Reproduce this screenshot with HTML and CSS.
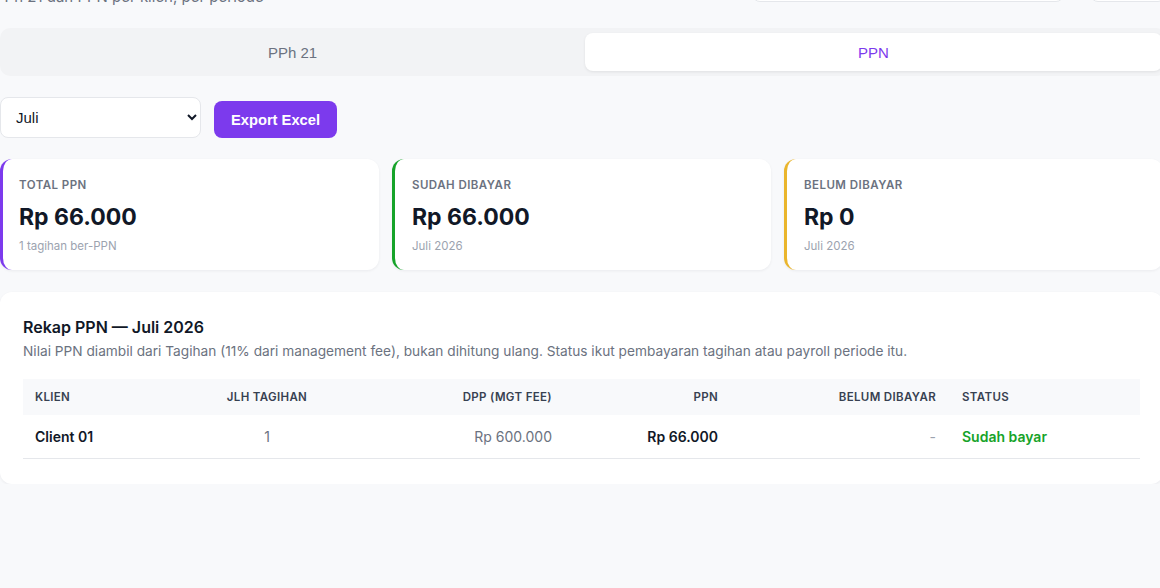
FILE: index.html
```html
<!DOCTYPE html>
<html lang="id">
<head>
<meta charset="utf-8">
<title>Rekap Pajak</title>
<link rel="stylesheet" href="styles.css">
</head>
<body>
<div class="page">
  <div class="topbar">
    <p class="subtitle">PPh 21 dan PPN per klien, per periode</p>
    <div class="top-controls">
      <div class="top-input"></div>
      <div class="top-btn"></div>
    </div>
  </div>

  <div class="tabs">
    <button class="tab">PPh 21</button>
    <button class="tab active">PPN</button>
  </div>

  <div class="controls">
    <select class="period">
      <option>Juli</option>
    </select>
    <button class="btn-export">Export Excel</button>
  </div>

  <div class="cards">
    <div class="card card-purple">
      <div class="card-label">TOTAL PPN</div>
      <div class="card-value">Rp 66.000</div>
      <div class="card-sub">1 tagihan ber-PPN</div>
    </div>
    <div class="card card-green">
      <div class="card-label">SUDAH DIBAYAR</div>
      <div class="card-value">Rp 66.000</div>
      <div class="card-sub">Juli 2026</div>
    </div>
    <div class="card card-yellow">
      <div class="card-label">BELUM DIBAYAR</div>
      <div class="card-value">Rp 0</div>
      <div class="card-sub">Juli 2026</div>
    </div>
  </div>

  <div class="panel">
    <h2 class="panel-title">Rekap PPN — Juli 2026</h2>
    <p class="panel-desc">Nilai PPN diambil dari Tagihan (11% dari management fee), bukan dihitung ulang. Status ikut pembayaran tagihan atau payroll periode itu.</p>
    <table class="rekap">
      <colgroup>
        <col class="c1"><col class="c2"><col class="c3"><col class="c4"><col class="c5"><col class="c6">
      </colgroup>
      <thead>
        <tr>
          <th class="left">KLIEN</th>
          <th class="center">JLH TAGIHAN</th>
          <th class="right">DPP (MGT FEE)</th>
          <th class="right">PPN</th>
          <th class="right unpaid">BELUM DIBAYAR</th>
          <th class="left">STATUS</th>
        </tr>
      </thead>
      <tbody>
        <tr>
          <td class="left client">Client 01</td>
          <td class="center muted">1</td>
          <td class="right muted">Rp 600.000</td>
          <td class="right strong">Rp 66.000</td>
          <td class="right dash unpaid">-</td>
          <td class="left status-paid">Sudah bayar</td>
        </tr>
      </tbody>
    </table>
  </div>
</div>
</body>
</html>
```

FILE: styles.css
```css
* { box-sizing: border-box; }

html, body {
  margin: 0;
  padding: 0;
  background: #f8f9fb;
  overflow: hidden;
}

body {
  font-family: Inter, "Noto Sans", sans-serif;
  color: #111827;
}

.page {
  width: 1166px;
}

.topbar {
  display: flex;
  justify-content: space-between;
  align-items: flex-start;
  height: 40px;
  margin-top: -34px;
}

.subtitle {
  margin: 21px 0 0 -5px;
  font-size: 15px;
  line-height: 20px;
  color: #6b7280;
}

.top-controls {
  display: flex;
  gap: 26px;
}

.top-input {
  width: 312px;
  height: 36px;
  background: #ffffff;
  border: 1px solid #e5e7eb;
  border-radius: 8px;
}

.top-btn {
  width: 76px;
  height: 36px;
  background: #ffffff;
  border: 1px solid #e5e7eb;
  border-radius: 8px;
}

.tabs {
  display: flex;
  gap: 4px;
  margin-top: 22px;
  padding: 5px 4px;
  background: #f2f3f5;
  border-radius: 10px;
}

.tab {
  flex: 1;
  height: 38px;
  border: none;
  background: transparent;
  border-radius: 8px;
  font-family: "Liberation Sans", Arial, sans-serif;
  font-size: 15px;
  color: #6b7280;
  cursor: pointer;
}

.tab.active {
  background: #ffffff;
  color: #7c3aed;
  box-shadow: 0 1px 3px rgba(0, 0, 0, 0.08);
}

.controls {
  display: flex;
  align-items: flex-end;
  gap: 13px;
  margin-top: 21px;
}

.period {
  width: 201px;
  height: 41px;
  padding: 0 10px 0 11px;
  background: #ffffff;
  border: 1px solid #e5e7eb;
  border-radius: 8px;
  font-family: "Liberation Sans", Arial, sans-serif;
  font-size: 15px;
  color: #111827;
}

.btn-export {
  height: 37px;
  padding: 0 17px;
  border: none;
  border-radius: 8px;
  background: #7c3aed;
  color: #ffffff;
  font-family: "Liberation Sans", Arial, sans-serif;
  font-size: 14.7px;
  font-weight: 700;
  cursor: pointer;
}

.cards {
  display: grid;
  grid-template-columns: repeat(3, 379px);
  gap: 13px;
  margin-top: 21px;
}

.card {
  height: 111px;
  padding: 18px 16px 0 17px;
  background: #ffffff;
  border-radius: 12px;
  border-left: 3px solid #7c3aed;
  box-shadow: 0 1px 3px rgba(15, 23, 42, 0.06);
}

.card-purple { border-left-color: #7c3aed; padding-left: 16px; }
.card-green { border-left-color: #16a329; }
.card-yellow { border-left-color: #eab52c; }

.card-label {
  font-size: 11.5px;
  line-height: 16px;
  font-weight: 600;
  letter-spacing: 0.04em;
  color: #6b7280;
}

.card-value {
  margin-top: 10px;
  font-size: 23px;
  line-height: 28px;
  font-weight: 700;
  color: #111827;
}

.card-sub {
  margin-top: 7px;
  font-size: 11.5px;
  line-height: 16px;
  color: #9ca3af;
}

.panel {
  width: 1163px;
  margin-top: 22px;
  padding: 23px 23px 25px 23px;
  background: #ffffff;
  border-radius: 12px;
  box-shadow: 0 1px 3px rgba(15, 23, 42, 0.06);
}

.panel-title {
  margin: 0;
  font-size: 16px;
  line-height: 24px;
  font-weight: 600;
  color: #111827;
}

.panel-desc {
  margin: 2px 0 0 0;
  font-size: 13.7px;
  line-height: 20px;
  color: #6b7280;
}

.rekap {
  width: 1117px;
  margin-top: 18px;
  border-collapse: collapse;
  table-layout: fixed;
}

.c1 { width: 167px; }
.c2 { width: 154px; }
.c3 { width: 220px; }
.c4 { width: 166px; }
.c5 { width: 220px; }
.c6 { width: 190px; }

.rekap th {
  height: 36px;
  padding: 0 12px;
  background: #f8f9fb;
  font-size: 11.5px;
  font-weight: 600;
  letter-spacing: 0.03em;
  color: #374151;
}

.rekap td {
  height: 43px;
  padding: 0 12px;
  font-size: 14px;
  border-bottom: 1px solid #e5e7eb;
}

.rekap .unpaid { padding-right: 14px; }

.left { text-align: left; }
.center { text-align: center; }
.right { text-align: right; }

.client { font-weight: 600; color: #111827; }
.muted { color: #6b7280; }
.strong { font-weight: 600; color: #111827; }
.dash { color: #9ca3af; }
.status-paid { color: #16a329; font-weight: 600; }
```
